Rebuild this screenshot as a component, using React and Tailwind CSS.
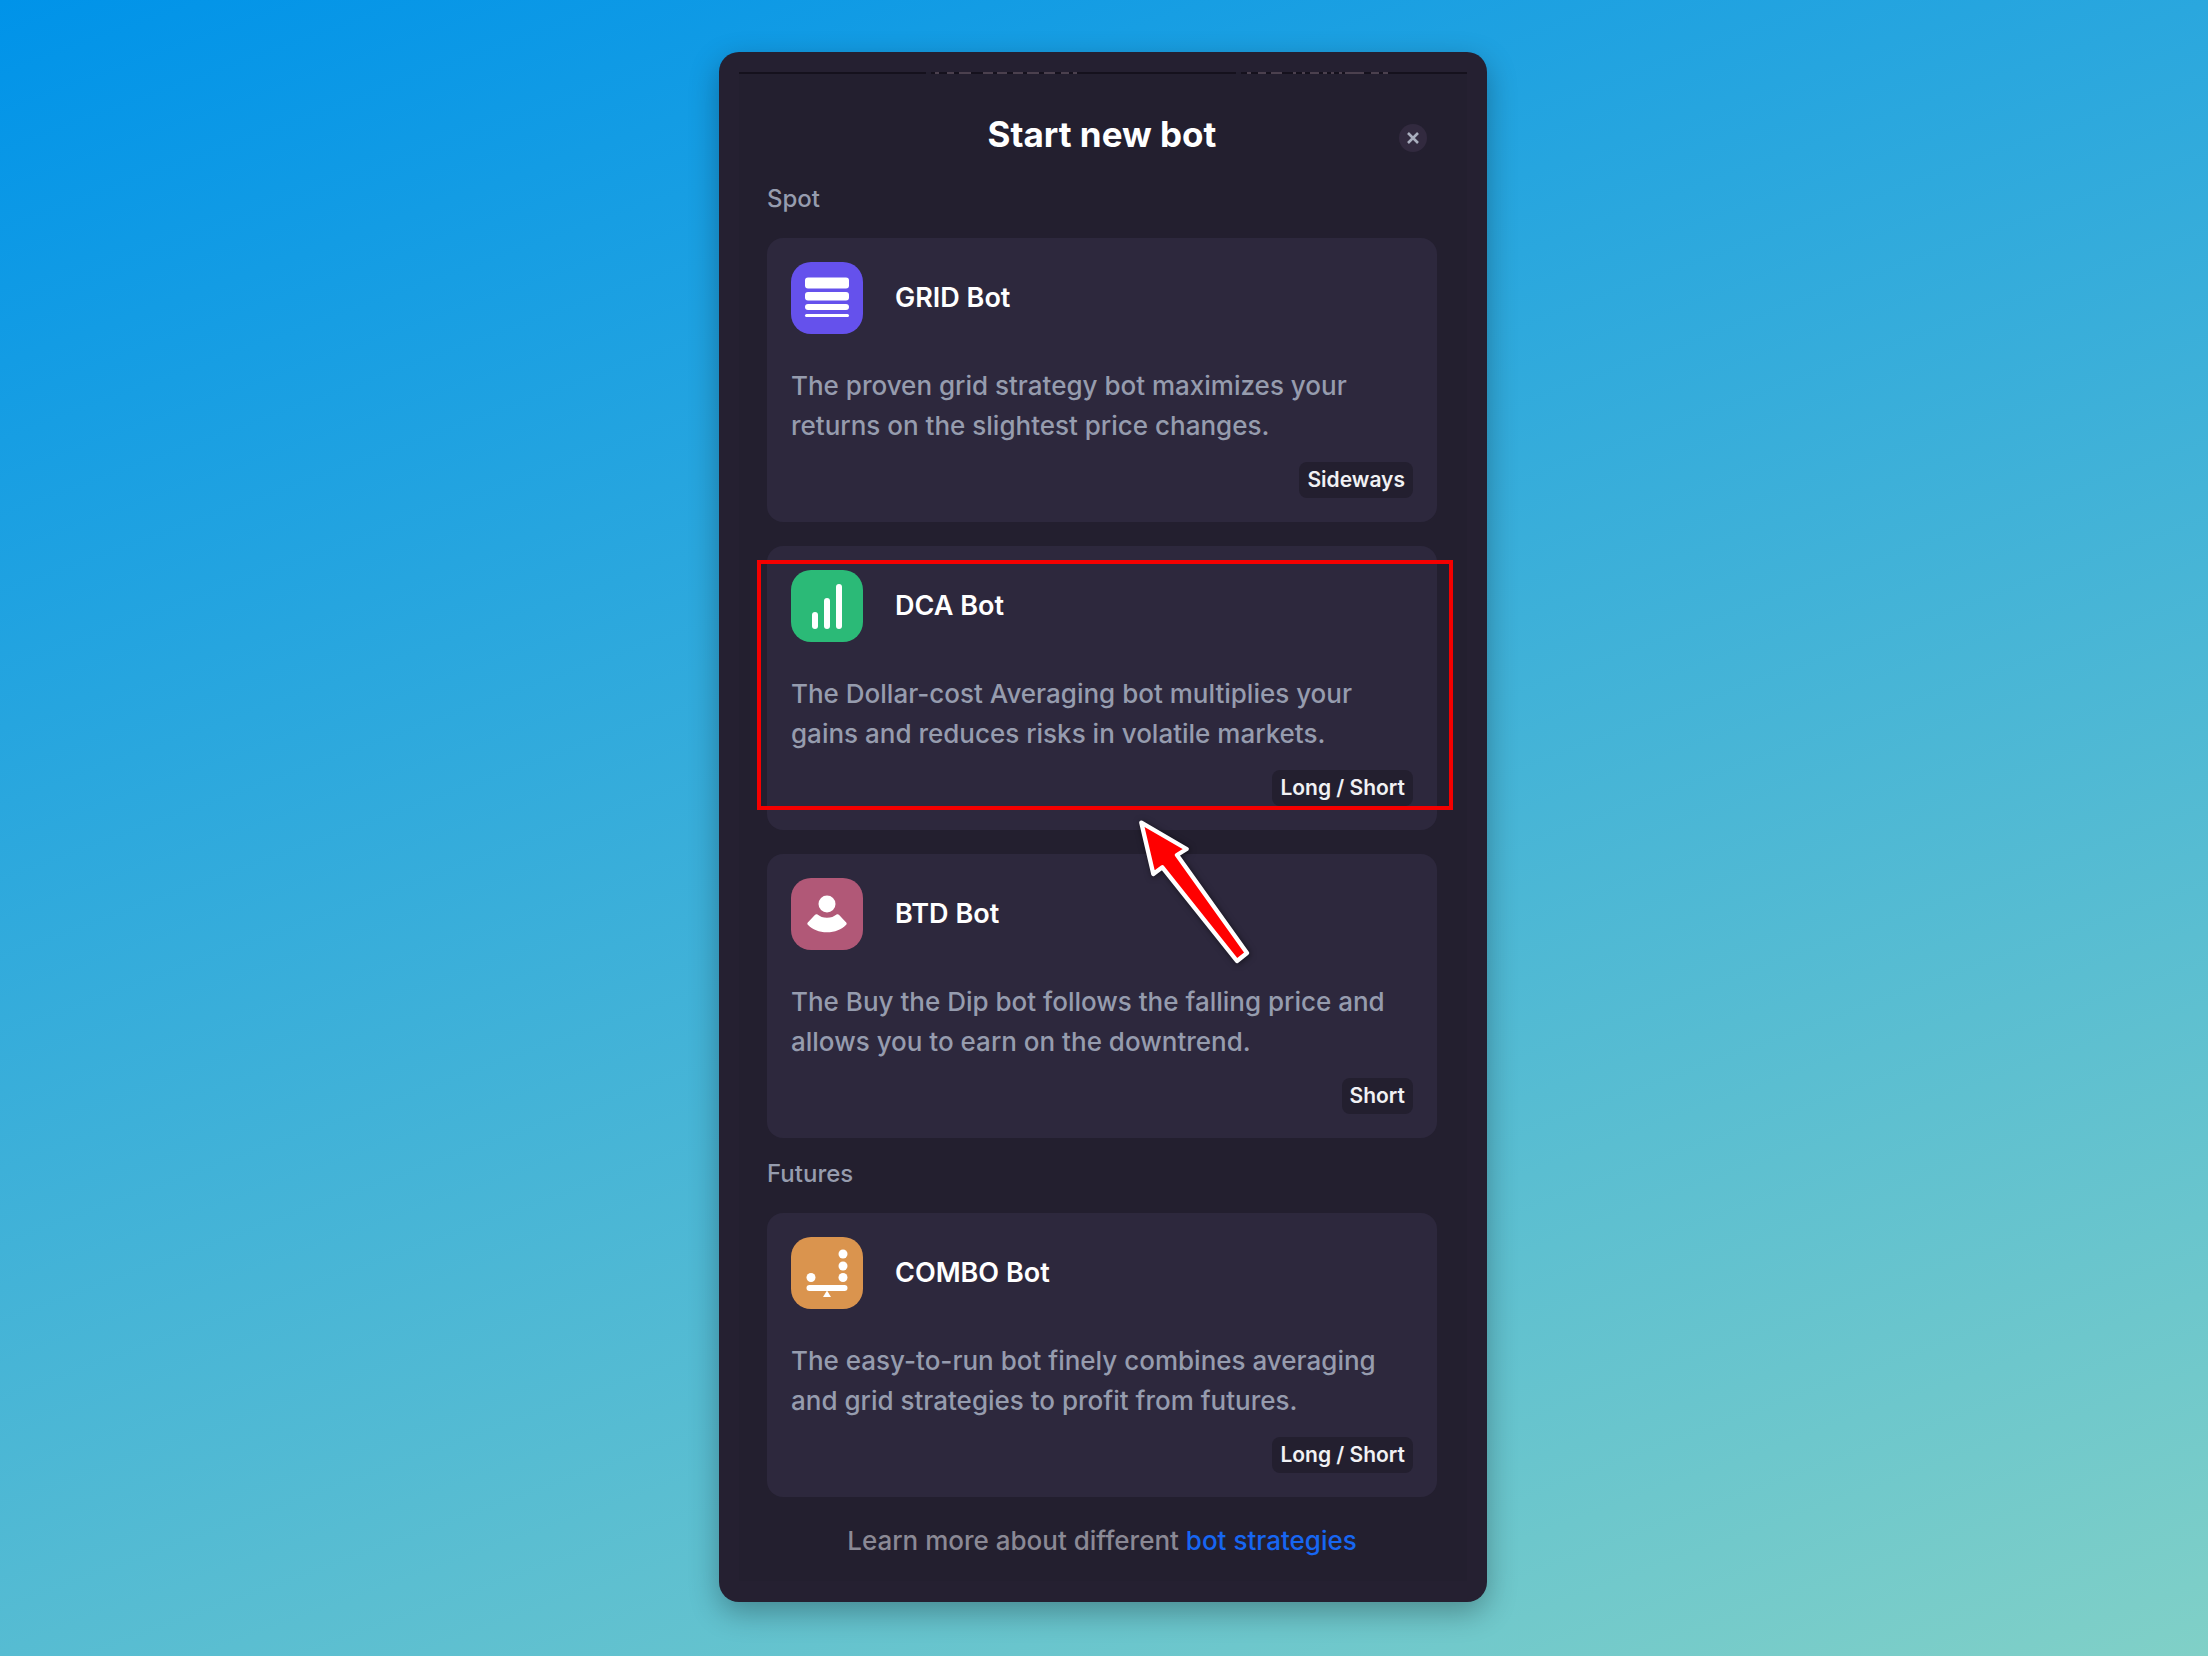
function BotIcon({ kind }) {
  return (
    <svg viewBox="0 0 72 72" className="size-[72px] shrink-0" aria-hidden="true">
      {kind === "grid" && (
        <>
          <rect width="72" height="72" rx="20" fill="#6551EC" />
          <g fill="#fff">
            <rect x="14" y="15.5" width="44" height="11" rx="3" />
            <rect x="14" y="30" width="44" height="8.5" rx="3" />
            <rect x="14" y="42" width="44" height="6" rx="3" />
            <rect x="14" y="52" width="44" height="3" rx="1.5" />
          </g>
        </>
      )}
      {kind === "dca" && (
        <>
          <rect width="72" height="72" rx="20" fill="#2BBA77" />
          <g fill="#fff">
            <rect x="21" y="42" width="6" height="17" rx="3" />
            <rect x="33" y="28" width="6" height="31" rx="3" />
            <rect x="45" y="14" width="6" height="45" rx="3" />
          </g>
        </>
      )}
      {kind === "btd" && (
        <>
          <rect width="72" height="72" rx="20" fill="#B15877" />
          <circle cx="36" cy="26" r="8.5" fill="#fff" />
          <path
            d="M26.5 36.5C29 38.5 32 39.8 36 39.8s7-1.3 9.5-3.3c.8-.6 1.800-.4 2.400.3l7.300 7.700c.6.7.6 1.500 0 2.200C50.500 51.500 44 54.300 36 54.300s-14.500-2.800-19.200-7.600c-.6-.7-.6-1.500 0-2.200l7.300-7.700c.6-.7 1.600-.9 2.400-.3Z"
            fill="#fff"
          />
        </>
      )}
      {kind === "combo" && (
        <>
          <rect width="72" height="72" rx="20" fill="#DA944E" />
          <g fill="#fff">
            <circle cx="52" cy="17" r="4.5" />
            <circle cx="52" cy="29" r="4.5" />
            <circle cx="52" cy="40.5" r="4.5" />
            <circle cx="20" cy="40.5" r="4.5" />
            <rect x="15.5" y="48" width="41" height="6" rx="3" />
            <path d="M36 53.5 40 60H32Z" />
          </g>
        </>
      )}
    </svg>
  );
}

function BotCard({ kind, title, text, tag, children }) {
  return (
    <article className="relative rounded-2xl bg-[#2D283D] p-6">
      <div className="flex items-center gap-8">
        <BotIcon kind={kind} />
        <h3 className="text-[27px] leading-8 font-semibold text-white">{title}</h3>
      </div>
      <p className="mt-8 text-[26px] leading-10 font-medium text-[#969CAE]">{text}</p>
      <div className="mt-4 flex justify-end">
        <span className="flex h-9 items-center rounded-lg bg-[#231F2F] px-2 text-[21px] leading-6 font-semibold text-[#F1F1F4]">
          {tag}
        </span>
      </div>
      {children}
    </article>
  );
}

function Highlight() {
  return (
    <>
      <div className="pointer-events-none absolute top-[14px] -right-4 bottom-5 -left-[10px] border-4 border-[#F40000]" />
      <svg
        viewBox="105 231 360 450"
        className="pointer-events-none absolute top-[271px] left-[368px] z-10 h-[150px] w-[120px] overflow-visible drop-shadow-[1px_1px_3px_rgba(0,0,0,0.5)]"
        aria-hidden="true"
      >
        <path
          d="M124 248 260 327 231 345 441 639 411 663 187 382 160 402Z"
          fill="#F00"
          stroke="#fff"
          strokeWidth="13"
          strokeLinejoin="round"
        />
      </svg>
    </>
  );
}

function ClippedHeadings() {
  return (
    <svg
      viewBox="0 0 470 2"
      className="absolute -top-[2px] left-[181px] h-[2px] w-[470px]"
      stroke="#4B404E"
      strokeWidth="2"
      aria-hidden="true"
    >
      <path stroke="#231F2F" d="M6 1H11M316 1H321" />
      <path d="M15 1h4M27 1h7M39 1h12M63 1h10M77 1h10M93 1h10M107 1h12M124 1h11M141 1h8M153 1h4" />
      <path d="M327 1h4M338 1h8M351 1h11M373 1h3M382 1h3M390 1h9M403 1h4M411 1h3M419 1h3M425 1h19M451 1h8M463 1h5" />
    </svg>
  );
}

export default function App() {
  return (
    <div className="flex min-h-screen justify-center bg-[linear-gradient(160deg,#0093E9_0%,#80D0C7_100%)] pt-[52px] pr-[2px] pb-[54px] font-['Inter',sans-serif]">
      <main className="w-full max-w-[768px] rounded-[20px] bg-[#252031] p-5 shadow-[0_10px_30px_rgba(0,0,0,0.3)]">
        <div className="relative border-t-2 border-[#15111D] bg-[#231F2F] pr-[30px] pb-6 pl-7">
          <ClippedHeadings />
          <header className="relative flex justify-center pt-[38px]">
            <h1 className="text-[35px] leading-[44px] font-bold text-white">Start new bot</h1>
            <button
              type="button"
              aria-label="Close"
              className="absolute top-[50px] right-[10px] flex size-7 items-center justify-center rounded-full bg-[#322A3F]"
            >
              <svg viewBox="0 0 12 12" className="size-3" fill="none" stroke="#A9AEBE" strokeWidth="2.6" aria-hidden="true">
                <path d="M1 1 11 11M11 1 1 11" />
              </svg>
            </button>
          </header>

          <section className="mt-[27px]">
            <h2 className="text-[24px] leading-8 font-medium text-[#969CAE]">Spot</h2>
            <div className="mt-[23px] flex flex-col gap-6">
              <BotCard
                kind="grid"
                title="GRID Bot"
                text="The proven grid strategy bot maximizes your returns on the slightest price changes."
                tag="Sideways"
              />
              <BotCard
                kind="dca"
                title="DCA Bot"
                text="The Dollar-cost Averaging bot multiplies your gains and reduces risks in volatile markets."
                tag="Long / Short"
              >
                <Highlight />
              </BotCard>
              <BotCard
                kind="btd"
                title="BTD Bot"
                text="The Buy the Dip bot follows the falling price and allows you to earn on the downtrend."
                tag="Short"
              />
            </div>
          </section>

          <section className="mt-5">
            <h2 className="text-[24px] leading-8 font-medium text-[#969CAE]">Futures</h2>
            <div className="mt-[23px]">
              <BotCard
                kind="combo"
                title="COMBO Bot"
                text="The easy-to-run bot finely combines averaging and grid strategies to profit from futures."
                tag="Long / Short"
              />
            </div>
          </section>

          <p className="mt-7 text-center text-[26px] leading-8 font-medium text-[#8B8995]">
            Learn more about different{" "}
            <a href="#strategies" className="text-[#1766F2]">
              bot strategies
            </a>
          </p>
        </div>
      </main>
    </div>
  );
}
